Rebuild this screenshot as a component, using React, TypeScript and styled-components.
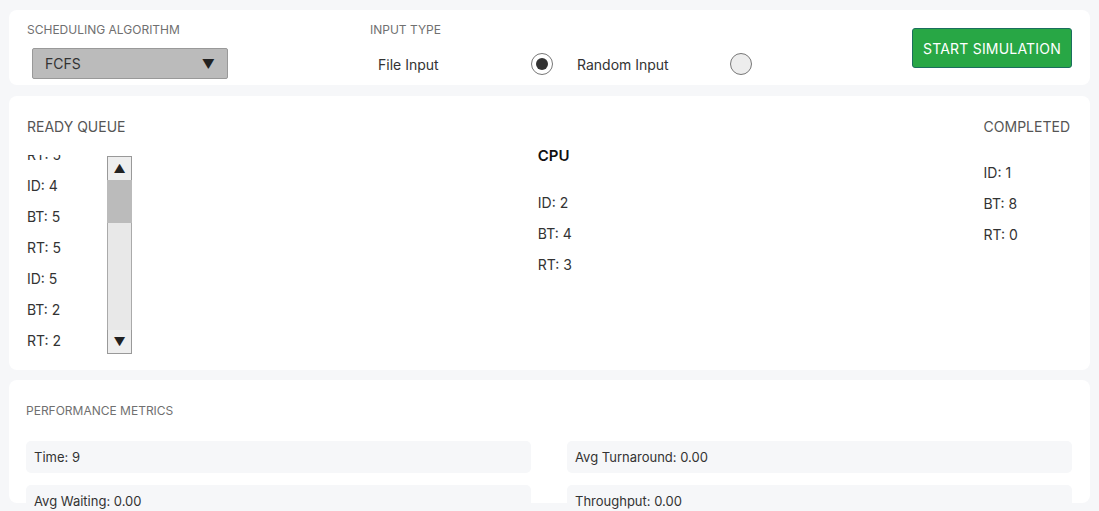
import React from "react";
import styled, { createGlobalStyle } from "styled-components";

interface Process {
  id: number;
  bt: number;
  rt: number;
}

const readyQueue: Process[] = [
  { id: 3, bt: 5, rt: 5 },
  { id: 4, bt: 5, rt: 5 },
  { id: 5, bt: 2, rt: 2 }
];

const running: Process = { id: 2, bt: 4, rt: 3 };
const completed: Process[] = [{ id: 1, bt: 8, rt: 0 }];

const metrics = [
  "Time: 9",
  "Avg Turnaround: 0.00",
  "Avg Waiting: 0.00",
  "Throughput: 0.00"
];

const ProcessLines: React.FC<{ p: Process }> = ({ p }) => (
  <>
    <Line>ID: {p.id}</Line>
    <Line>BT: {p.bt}</Line>
    <Line>RT: {p.rt}</Line>
  </>
);

export default function App() {
  return (
    <>
      <GlobalStyle />
      <Page>
        <ControlCard>
          <AlgorithmSection>
            <Label>Scheduling Algorithm</Label>
            <Select>
              <span>FCFS</span>
              <Arrow>▼</Arrow>
            </Select>
          </AlgorithmSection>
          <InputSection>
            <Label>Input Type</Label>
            <Options>
              <Option>
                <OptionText>File Input</OptionText>
                <Radio checked />
              </Option>
              <Option>
                <OptionText>Random Input</OptionText>
                <Radio checked={false} />
              </Option>
            </Options>
          </InputSection>
          <StartButton>START SIMULATION</StartButton>
        </ControlCard>

        <QueueCard>
          <Column>
            <Heading>READY QUEUE</Heading>
            <QueueBox>
              <QueueList>
                <ScrollContent>
                  {readyQueue.map(p => (
                    <ProcessLines key={p.id} p={p} />
                  ))}
                </ScrollContent>
              </QueueList>
              <Scrollbar>
                <ScrollButton>▲</ScrollButton>
                <Track>
                  <Thumb />
                </Track>
                <ScrollButton>▼</ScrollButton>
              </Scrollbar>
            </QueueBox>
          </Column>
          <CpuColumn>
            <CpuHeading>CPU</CpuHeading>
            <Lines>
              <ProcessLines p={running} />
            </Lines>
          </CpuColumn>
          <Column>
            <Heading>COMPLETED</Heading>
            <Lines>
              {completed.map(p => (
                <ProcessLines key={p.id} p={p} />
              ))}
            </Lines>
          </Column>
        </QueueCard>

        <MetricsCard>
          <Label>Performance Metrics</Label>
          <MetricGrid>
            {metrics.map(m => (
              <Metric key={m}>{m}</Metric>
            ))}
          </MetricGrid>
        </MetricsCard>
      </Page>
    </>
  );
}

const GlobalStyle = createGlobalStyle`
  html, body {
    margin: 0;
    background: #f6f7f9;
    font-family: Inter, "Noto Sans", sans-serif;
    color: #333;
  }
`;

const Page = styled.div`
  display: flex;
  flex-direction: column;
  gap: 11px;
  padding: 10px 9px 30px;
`;

const Card = styled.div`
  background: #fff;
  border-radius: 8px;
`;

const ControlCard = styled(Card)`
  display: flex;
  align-items: flex-start;
  height: 75px;
  padding: 0 18px;
  box-sizing: border-box;
`;

const Label = styled.div`
  font-size: 12px;
  line-height: 14px;
  color: #707070;
  text-transform: uppercase;
`;

const AlgorithmSection = styled.div`
  display: flex;
  flex-direction: column;
  gap: 11px;
  width: 343px;
  padding-top: 13px;
`;

const Select = styled.div`
  display: flex;
  justify-content: space-between;
  align-items: center;
  width: 196px;
  height: 31px;
  box-sizing: border-box;
  margin-left: 5px;
  padding: 0 12px;
  background: #bbbbbb;
  border: 1px solid #999;
  border-radius: 2px;
  font-size: 14px;
  color: #333;
`;

const Arrow = styled.span`
  font-size: 13px;
  color: #222;
`;

const InputSection = styled.div`
  display: flex;
  flex-direction: column;
  gap: 16px;
  flex: 1;
  padding-top: 13px;
`;

const Options = styled.div`
  display: flex;
  gap: 24px;
  padding-left: 8px;
`;

const Option = styled.div`
  display: flex;
  align-items: center;
`;

const OptionText = styled.span`
  width: 153px;
  font-size: 14px;
  color: #333;
`;

const Radio = styled.span<{ checked: boolean }>`
  display: flex;
  align-items: center;
  justify-content: center;
  width: 22px;
  height: 22px;
  box-sizing: border-box;
  border: 1px solid #777;
  border-radius: 50%;
  background: ${props => (props.checked ? "#fff" : "#ededed")};

  &::after {
    content: "";
    width: 12px;
    height: 12px;
    border-radius: 50%;
    background: ${props => (props.checked ? "#333" : "transparent")};
  }
`;

const StartButton = styled.button`
  align-self: center;
  width: 160px;
  height: 40px;
  margin-top: 1px;
  background: #28a745;
  border: 1px solid #1b6e5e;
  border-radius: 3px;
  color: #fff;
  font-family: Inter, "Noto Sans", sans-serif;
  font-size: 14px;
  letter-spacing: 0.2px;
`;

const QueueCard = styled(Card)`
  display: flex;
  justify-content: space-between;
  height: 274px;
  margin-bottom: -1px;
  padding: 22px 20px 0 18px;
  box-sizing: border-box;
`;

const Column = styled.div`
  display: flex;
  flex-direction: column;
`;

const Heading = styled.div`
  font-size: 14px;
  line-height: 18px;
  color: #555;
`;

const QueueBox = styled.div`
  display: flex;
  margin-top: 19px;
`;

const QueueList = styled.div`
  width: 80px;
  height: 200px;
  overflow: hidden;
`;

const ScrollContent = styled.div`
  margin-top: -78px;
`;

const Lines = styled.div`
  margin-top: 21px;
`;

const Line = styled.div`
  height: 31px;
  line-height: 31px;
  font-size: 14px;
  color: #333;
`;

const Scrollbar = styled.div`
  display: flex;
  flex-direction: column;
  width: 25px;
  height: 198px;
  margin-top: 1px;
  box-sizing: border-box;
  border: 1px solid #999;
  background: #e8e8e8;
`;

const ScrollButton = styled.div`
  height: 23px;
  flex-shrink: 0;
  display: flex;
  align-items: center;
  justify-content: center;
  background: #eeeeee;
  font-size: 12px;
  color: #222;
`;

const Track = styled.div`
  flex: 1;
  border-left: 1px solid #aaa;
  border-right: 1px solid #aaa;
  background: #e8e8e8;
  margin: 0 -1px;
`;

const Thumb = styled.div`
  height: 43px;
  margin: 0 -1px;
  background: #bbbbbb;
`;

const CpuColumn = styled(Column)`
  width: 40px;
  padding-top: 29px;
`;

const CpuHeading = styled.div`
  font-size: 15px;
  line-height: 18px;
  font-weight: 600;
  color: #111;
  margin-bottom: 1px;
`;

const MetricsCard = styled(Card)`
  height: 123px;
  padding: 24px 18px 0 17px;
  box-sizing: border-box;
`;

const MetricGrid = styled.div`
  display: grid;
  grid-template-columns: 1fr 1fr;
  column-gap: 36px;
  row-gap: 12px;
  margin-top: 23px;
`;

const Metric = styled.div`
  height: 32px;
  display: flex;
  align-items: center;
  padding: 0 8px;
  background: #f6f7f9;
  border-radius: 5px;
  font-size: 13px;
  color: #333;
`;
